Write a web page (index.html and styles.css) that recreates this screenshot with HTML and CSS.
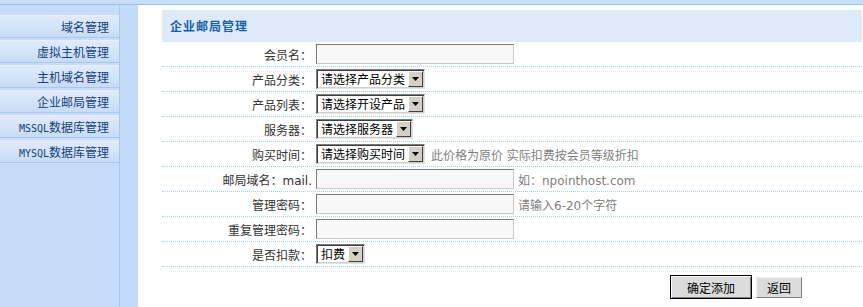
FILE: index.html
```html
<!DOCTYPE html>
<html lang="zh-CN">
<head>
<meta charset="utf-8">
<title>企业邮局管理</title>
<link rel="stylesheet" href="styles.css">
</head>
<body>
<div class="topbar"></div>
<div class="layout">
  <aside class="sidebar">
    <ul class="menu">
      <li>域名管理</li>
      <li>虚拟主机管理</li>
      <li>主机域名管理</li>
      <li>企业邮局管理</li>
      <li><span class="en">MSSQL</span>数据库管理</li>
      <li><span class="en">MYSQL</span>数据库管理</li>
    </ul>
  </aside>
  <div class="strip"></div>
  <main class="main">
    <div class="panel-head">企业邮局管理</div>
    <div class="form">
      <div class="row"><span class="lbl">会员名：</span><input class="txt" type="text"></div>
      <div class="row"><span class="lbl">产品分类：</span><div class="select"><span class="val">请选择产品分类</span><span class="arrow"><svg width="7" height="4" viewBox="0 0 7 4"><path d="M0 0H7L3.5 4Z" fill="#000"/></svg></span></div></div>
      <div class="row"><span class="lbl">产品列表：</span><div class="select"><span class="val">请选择开设产品</span><span class="arrow"><svg width="7" height="4" viewBox="0 0 7 4"><path d="M0 0H7L3.5 4Z" fill="#000"/></svg></span></div></div>
      <div class="row"><span class="lbl">服务器：</span><div class="select"><span class="val">请选择服务器</span><span class="arrow"><svg width="7" height="4" viewBox="0 0 7 4"><path d="M0 0H7L3.5 4Z" fill="#000"/></svg></span></div></div>
      <div class="row"><span class="lbl">购买时间：</span><div class="select"><span class="val">请选择购买时间</span><span class="arrow"><svg width="7" height="4" viewBox="0 0 7 4"><path d="M0 0H7L3.5 4Z" fill="#000"/></svg></span></div><span class="hint">此价格为原价 实际扣费按会员等级折扣</span></div>
      <div class="row"><span class="lbl">邮局域名：mail.</span><input class="txt" type="text"><span class="hint">如：npointhost.com</span></div>
      <div class="row"><span class="lbl">管理密码：</span><input class="txt" type="password"><span class="hint">请输入6-20个字符</span></div>
      <div class="row"><span class="lbl">重复管理密码：</span><input class="txt" type="password"></div>
      <div class="row"><span class="lbl">是否扣款：</span><div class="select"><span class="val">扣费</span><span class="arrow"><svg width="7" height="4" viewBox="0 0 7 4"><path d="M0 0H7L3.5 4Z" fill="#000"/></svg></span></div></div>
    </div>
    <div class="actions">
      <button class="btn btn-primary" type="button">确定添加</button>
      <button class="btn btn-back" type="button">返回</button>
    </div>
  </main>
</div>
</body>
</html>
```

FILE: styles.css
```css
* { box-sizing: border-box; }
html, body { margin: 0; padding: 0; background: #fff; }
body {
  font-family: "DejaVu Sans", "Noto Sans CJK SC", sans-serif;
  font-size: 12px;
  color: #333;
  height: 307px;
  overflow: hidden;
}
.topbar {
  height: 5px;
  background: #c9ddf7;
  border-bottom: 1px solid #98c1ee;
}
.layout {
  display: flex;
  height: calc(100% - 5px);
}
.sidebar {
  width: 120px;
  flex: none;
  background: #c7dcf8;
  border-right: 1px solid #a9c8ee;
  padding-top: 10px;
}
.menu {
  list-style: none;
  margin: 0;
  padding: 0;
}
.menu li {
  height: 23px;
  margin-bottom: 2px;
  border-top: 1px solid #e6effc;
  border-bottom: 1px solid #a8c6ee;
  background: linear-gradient(#e0ebfb, #d3e3f8 55%, #c8dbf5);
  text-align: right;
  padding-right: 10px;
  line-height: 21px;
  font-family: "Noto Sans CJK SC", sans-serif;
  font-size: 12px;
  color: #163f7a;
}
.menu .en {
  font-family: "DejaVu Sans Mono", monospace;
  font-size: 10px;
}
.strip {
  width: 18px;
  flex: none;
  background: #c3daf8;
}
.main {
  flex: 1;
  padding: 5px 1px 0 24px;
}
.panel-head {
  height: 32px;
  line-height: 32px;
  background: #dfeaf9;
  padding-left: 8px;
  font-family: "Noto Sans CJK SC", sans-serif;
  font-weight: bold;
  font-size: 12px;
  letter-spacing: 1px;
  color: #1560a8;
}
.row {
  display: flex;
  align-items: center;
  height: 25px;
  border-bottom: 1px dotted #9fd3ee;
}
.lbl {
  width: 150px;
  flex: none;
  text-align: right;
  color: #333;
}
.txt {
  width: 198px;
  height: 20px;
  margin: 0 0 0 4px;
  padding: 0 3px;
  border: 1px solid;
  border-color: #7b7b7b #c9c9c9 #c9c9c9 #7b7b7b;
  background: #f8f8f8;
  font: inherit;
}
.select {
  display: inline-flex;
  align-items: center;
  height: 20px;
  margin-left: 4px;
  padding: 0 1px 0 4px;
  border: 1px solid;
  border-color: #7a7a7a #e4e2dc #e4e2dc #7a7a7a;
  box-shadow: inset 1px 1px 0 #404040, inset -1px -1px 0 #d4d0c8;
  background: #fff;
  font-family: "Noto Sans CJK SC", sans-serif;
  color: #000;
}
.select .val { line-height: 16px; }
.select .arrow {
  display: flex;
  align-items: center;
  justify-content: center;
  width: 15px;
  height: 16px;
  margin-left: 3px;
  background: #d4d0c8;
  border: 1px solid;
  border-color: #fff #404040 #404040 #fff;
}
.hint {
  margin-left: 4px;
  color: #808080;
}
.select + .hint { margin-left: 6px; }
.actions {
  display: flex;
  align-items: center;
  gap: 4px;
  padding-left: 508px;
  margin-top: 8px;
}
.btn {
  font-family: "Noto Sans CJK SC", sans-serif;
  font-size: 12px;
  color: #000;
  background: #dcdcdc;
  padding: 0;
  cursor: pointer;
}
.btn-primary {
  width: 82px;
  height: 24px;
  border: 1px solid #000;
  box-shadow: inset 1px 1px 0 #fff, inset -1px -1px 0 #808080;
}
.btn-back {
  width: 46px;
  height: 21px;
  border: 1px solid;
  border-color: #f0f0f0 #808080 #808080 #f0f0f0;
}
```
